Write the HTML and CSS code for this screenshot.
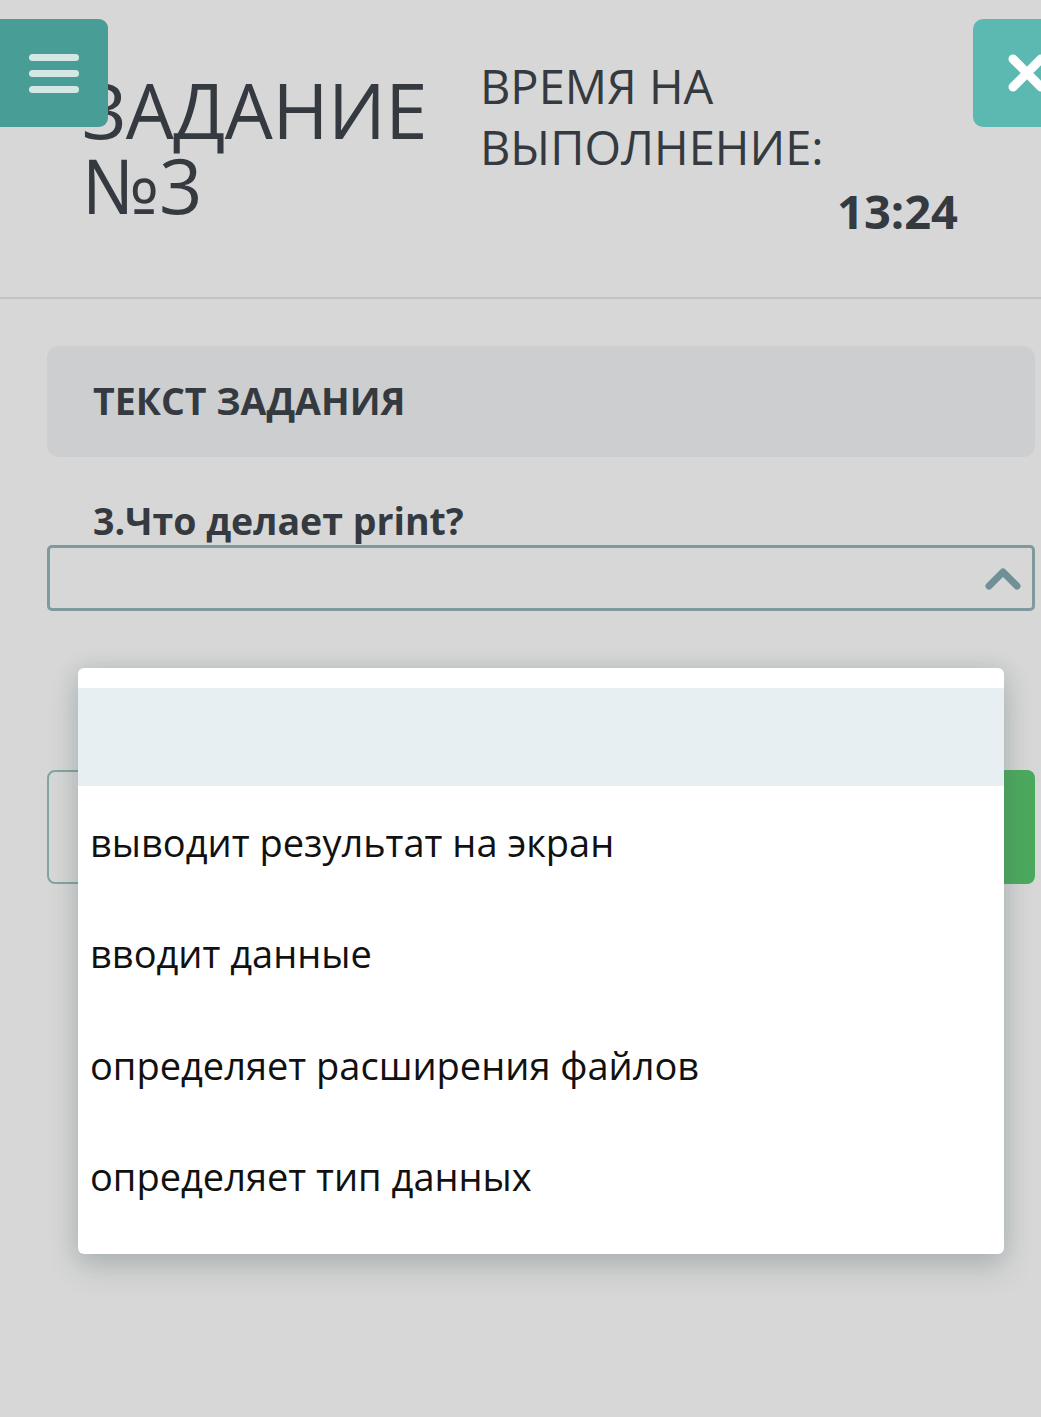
FILE: index.html
```html
<!DOCTYPE html>
<html lang="ru">
<head>
    <meta charset="UTF-8">
    <meta name="viewport" content="width=device-width, initial-scale=1.0">
    <title>Задание №3</title>
    <link rel="stylesheet" href="styles.css">
</head>
<body>
    <!-- Top bar: task number and timer -->
    <header class="task-header">
        <button class="menu-btn" aria-label="Меню">
            <span></span><span></span><span></span>
        </button>
        <h1 class="task-title">ЗАДАНИЕ №3</h1>
        <div class="timer">
            <div class="timer-label">ВРЕМЯ НА ВЫПОЛНЕНИЕ:</div>
            <div class="timer-value">13:24</div>
        </div>
        <button class="close-btn" aria-label="Закрыть">
            <svg width="40" height="40" viewBox="0 0 40 40">
                <path d="M6 6 L34 34 M34 6 L6 34" stroke="#fff" stroke-width="9" stroke-linecap="round"/>
            </svg>
        </button>
    </header>

    <main class="task-body">
        <div class="task-panel">ТЕКСТ ЗАДАНИЯ</div>

        <div class="question">3.Что делает print?</div>
        <div class="select-box">
            <svg class="chevron" width="36" height="26" viewBox="0 0 36 26">
                <path d="M4 21 L18 7 L32 21" fill="none" stroke="#6f9096" stroke-width="7" stroke-linecap="round" stroke-linejoin="round"/>
            </svg>
        </div>

        <!-- answer row, mostly hidden by the open list -->
        <div class="answer-row">
            <div class="answer-field"></div>
            <div class="answer-btn"></div>
        </div>

        <!-- open dropdown list -->
        <ul class="dropdown">
            <li class="option empty selected"></li>
            <li class="option">выводит результат на экран</li>
            <li class="option">вводит данные</li>
            <li class="option">определяет расширения файлов</li>
            <li class="option">определяет тип данных</li>
        </ul>
    </main>
</body>
</html>
```

FILE: styles.css
```css
body {
    margin: 0;
    min-height: 1417px;
    background: #d7d7d7;
    font-family: "Open Sans", "Noto Sans", sans-serif;
    color: #343a40;
}
.task-header {
    position: relative;
    display: flex;
    align-items: flex-start;
    height: 299px;
    box-sizing: border-box;
    padding: 56px 0 0 82px;
    border-bottom: 2px solid #c3c3c3;
}
.menu-btn {
    position: absolute;
    left: 0;
    top: 19px;
    width: 108px;
    height: 108px;
    border: none;
    border-radius: 0 9px 9px 0;
    background: #489e96;
    display: flex;
    flex-direction: column;
    justify-content: center;
    align-items: center;
    gap: 9px;
    padding: 0;
}
.menu-btn span {
    display: block;
    width: 50px;
    height: 7px;
    border-radius: 4px;
    background: #d4e7e5;
}
.close-btn {
    position: absolute;
    left: 973px;
    top: 19px;
    width: 108px;
    height: 108px;
    border: none;
    border-radius: 10px;
    background: #5cb9b2;
    display: flex;
    justify-content: center;
    align-items: center;
    padding: 0;
}
.task-title {
    flex: 0 0 398px;
    margin: 16px 0 0;
    font-size: 76px;
    font-weight: 400;
    line-height: 75px;
    letter-spacing: -0.5px;
}
.timer {
    width: 478px;
}
.timer-label {
    font-size: 47px;
    line-height: 61px;
}
.timer-value {
    margin-top: 3px;
    text-align: right;
    font-size: 47px;
    font-weight: 700;
    line-height: 61px;
}
.task-body {
    position: relative;
    padding: 47px 6px 0 47px;
}
.task-panel {
    background: #cdcecf;
    border-radius: 12px;
    height: 111px;
    box-sizing: border-box;
    padding: 33px 46px 0;
    font-size: 37.5px;
    font-weight: 700;
    line-height: 44px;
}
.question {
    margin: 42px 0 2px 46px;
    font-size: 37.5px;
    font-weight: 700;
    line-height: 44px;
}
.select-box {
    height: 66px;
    box-sizing: border-box;
    border: 3px solid #7f9a9c;
    border-radius: 5px;
    display: flex;
    justify-content: flex-end;
    align-items: center;
    padding-right: 11px;
}
.answer-row {
    display: flex;
    gap: 20px;
    height: 114px;
    margin-top: 159px;
}
.answer-field {
    flex: 1;
    border: 2px solid #80a6a1;
    border-radius: 8px;
}
.answer-btn {
    width: 200px;
    border-radius: 8px;
    background: linear-gradient(to right, #74b882, #4aa95c);
}
.dropdown {
    position: absolute;
    left: 78px;
    top: 369px;
    width: 926px;
    margin: 0;
    padding: 20px 0 22px;
    list-style: none;
    background: #fff;
    border-radius: 6px;
    box-shadow: 0 14px 30px rgba(60, 80, 80, 0.22), 0 0 22px rgba(60, 90, 90, 0.14);
}
.option {
    height: 111.5px;
    box-sizing: border-box;
    padding-left: 12px;
    display: flex;
    align-items: center;
    font-size: 38px;
    color: #111;
}
.option.empty {
    height: 98px;
}
.option.selected {
    background: #e8eff2;
}
```
